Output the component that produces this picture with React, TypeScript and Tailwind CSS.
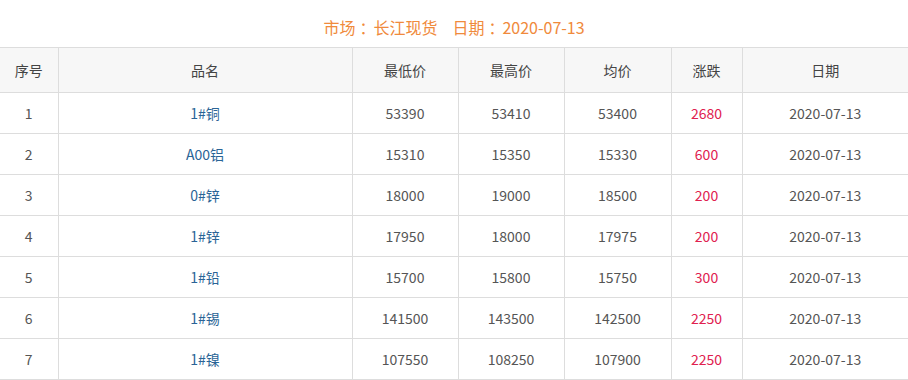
const rows = [
  { id: 1, name: "1#铜", low: "53390", high: "53410", avg: "53400", change: "2680", date: "2020-07-13" },
  { id: 2, name: "A00铝", low: "15310", high: "15350", avg: "15330", change: "600", date: "2020-07-13" },
  { id: 3, name: "0#锌", low: "18000", high: "19000", avg: "18500", change: "200", date: "2020-07-13" },
  { id: 4, name: "1#锌", low: "17950", high: "18000", avg: "17975", change: "200", date: "2020-07-13" },
  { id: 5, name: "1#铅", low: "15700", high: "15800", avg: "15750", change: "300", date: "2020-07-13" },
  { id: 6, name: "1#锡", low: "141500", high: "143500", avg: "142500", change: "2250", date: "2020-07-13" },
  { id: 7, name: "1#镍", low: "107550", high: "108250", avg: "107900", change: "2250", date: "2020-07-13" },
];

const headers = ["序号", "品名", "最低价", "最高价", "均价", "涨跌", "日期"];

export default function App() {
  return (
    <div className="w-[908px] bg-white text-[14px] text-[#555] font-['Microsoft_YaHei','Noto_Sans_CJK_SC',sans-serif]">
      <div className="h-[47px] pt-[14px] text-center text-[16px] leading-[26px] text-[#f08a3c]">
        市场<span className="ml-[4px] mr-[6px] [font-feature-settings:'halt']">：</span>长江现货
        <span className="ml-[15px]">日期</span>
        <span className="ml-[4px] mr-[6px] [font-feature-settings:'halt']">：</span>2020-07-13
      </div>
      <table className="w-full table-fixed border-collapse">
        <colgroup>
          <col className="w-[58px]" />
          <col className="w-[294px]" />
          <col className="w-[106px]" />
          <col className="w-[106px]" />
          <col className="w-[107px]" />
          <col className="w-[71px]" />
          <col />
        </colgroup>
        <thead>
          <tr className="h-[45px] bg-[#f7f7f7]">
            {headers.map((h, i) => (
              <th
                key={h}
                className={`border-y border-[#dddddd] font-normal text-[#444] ${i > 0 ? "border-l" : ""}`}
              >
                {h}
              </th>
            ))}
          </tr>
        </thead>
        <tbody>
          {rows.map((r) => (
            <tr key={r.id} className="h-[41px] text-center">
              <td className="border-b border-[#dddddd]">{r.id}</td>
              <td className="border-b border-l border-[#dddddd] text-[#2a6496]">{r.name}</td>
              <td className="border-b border-l border-[#dddddd]">{r.low}</td>
              <td className="border-b border-l border-[#dddddd]">{r.high}</td>
              <td className="border-b border-l border-[#dddddd]">{r.avg}</td>
              <td className="border-b border-l border-[#dddddd] text-[#e0204f]">{r.change}</td>
              <td className="border-b border-l border-[#dddddd]">{r.date}</td>
            </tr>
          ))}
        </tbody>
      </table>
    </div>
  );
}
